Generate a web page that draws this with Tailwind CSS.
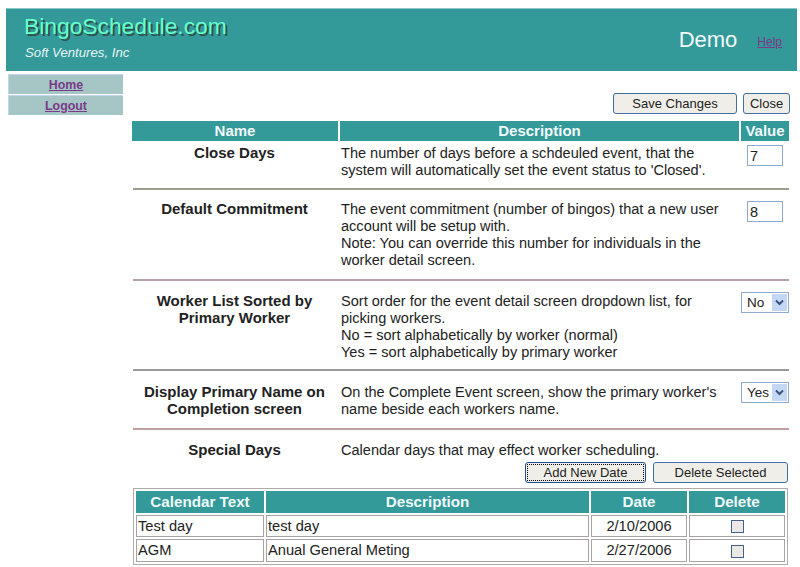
<!DOCTYPE html>
<html lang="en">
<head>
    <meta charset="UTF-8">
    <title>BingoSchedule.com</title>
    <script src="https://cdn.jsdelivr.net/npm/@tailwindcss/browser@4"></script>
</head>
<body class="w-[800px] h-[567px] overflow-hidden bg-white font-['Liberation_Sans',Arial,sans-serif] text-[14.55px] leading-[17px] text-[#222]">
    <!-- Header -->
    <div class="ml-[6px] mt-[8px] w-[791px] h-[63px] bg-[#339999] border-t border-[#8fc4c4] flex justify-between">
        <div class="pl-[18px] pt-[3px]">
            <div class="text-[22.8px] leading-[28px] text-[#66ffcc] [text-shadow:2px_2px_0_#30504a]">BingoSchedule.com</div>
            <div class="mt-[5px] ml-[1px] text-[13.2px] leading-[16px] italic text-[#e6f5f5]">Soft Ventures, Inc</div>
        </div>
        <div class="flex items-start pr-[15px] pt-[17px]">
            <span class="text-[22px] leading-[28px] text-[#f0fafa]">Demo</span>
            <a href="#" class="ml-[20px] mt-[9px] text-[12px] leading-[15px] text-[#7a3a88] underline">Help</a>
        </div>
    </div>

    <div class="flex">
        <!-- Sidebar -->
        <div class="ml-[8px] mt-[3px] w-[115px] flex flex-col gap-[1px]">
            <a href="#" class="h-[20px] bg-[#a6c6c6] border-t border-l border-[#c4d4ec] text-center font-bold text-[12.4px] leading-[20px] text-[#7a3a88] underline">Home</a>
            <a href="#" class="h-[20px] bg-[#a6c6c6] border-t border-l border-[#c4d4ec] text-center font-bold text-[12.4px] leading-[20px] text-[#7a3a88] underline">Logout</a>
        </div>

        <!-- Main -->
        <div class="ml-[8px] w-[660px]">
            <div class="flex justify-end gap-[6px] mt-[22px] h-[21px] pr-[1px]">
                <button class="w-[124px] h-[21px] bg-[#f0eee8] border border-[#3f6f9f] rounded-[3px] text-[13px] leading-[17px] text-[#222]">Save Changes</button>
                <button class="w-[47px] h-[21px] bg-[#f0eee8] border border-[#3f6f9f] rounded-[3px] text-[13px] leading-[17px] text-[#222]">Close</button>
            </div>

            <!-- Settings header -->
            <div class="mt-[7px] ml-[1px] grid grid-cols-[206px_399px_48px] gap-x-[2px] h-[20px] bg-white text-center font-bold text-[#f0fafa] text-[15px] leading-[20px]">
                <div class="bg-[#339999]">Name</div>
                <div class="bg-[#339999]">Description</div>
                <div class="bg-[#339999]">Value</div>
            </div>

            <!-- Close Days -->
            <div class="ml-[2px] w-[656px] h-[49px] border-b-2 border-[#a09c90] grid grid-cols-[206px_1fr_49px] pt-[4px]">
                <div class="text-center font-bold text-[15px] pl-[4px] pr-[7px] -mt-[1px]">Close Days</div>
                <div class="pl-[2px]">The number of days before a schdeuled event, that the<br>system will automatically set the event status to 'Closed'.</div>
                <div class="pl-[7px]"><input value="7" class="w-[36px] h-[21px] border border-[#8fa9cf] px-[2px] text-[14.5px] bg-white"></div>
            </div>

            <!-- Default Commitment -->
            <div class="ml-[2px] w-[656px] h-[91px] border-b-2 border-[#b5a0b0] grid grid-cols-[206px_1fr_49px] pt-[11px]">
                <div class="text-center font-bold text-[15px] pl-[4px] pr-[7px] -mt-[1px]">Default Commitment</div>
                <div class="pl-[2px]">The event commitment (number of bingos) that a new user<br>account will be setup with.<br>Note: You can override this number for individuals in the<br>worker detail screen.</div>
                <div class="pl-[7px]"><input value="8" class="w-[36px] h-[21px] border border-[#8fa9cf] px-[2px] text-[14.5px] bg-white"></div>
            </div>

            <!-- Worker List -->
            <div class="ml-[2px] w-[656px] h-[90px] border-b-2 border-[#9a9a9a] grid grid-cols-[206px_1fr_49px] pt-[12px]">
                <div class="text-center font-bold text-[15px] pl-[4px] pr-[7px] -mt-[1px]">Worker List Sorted by<br>Primary Worker</div>
                <div class="pl-[2px]">Sort order for the event detail screen dropdown list, for<br>picking workers.<br>No = sort alphabetically by worker (normal)<br>Yes = sort alphabetically by primary worker</div>
                <div class="pl-[1px] -mt-[1px]">
                    <div class="w-[48px] h-[21px] border border-[#8fa9cf] flex items-center justify-between pl-[5px] pr-[1px] text-[13.5px]">
                        <span>No</span>
                        <span class="w-[15px] h-[17px] bg-[#c4d8f4] flex items-center justify-center">
                            <svg width="9" height="7" viewBox="0 0 9 7"><path d="M1 1.5 4.5 5 8 1.5" fill="none" stroke="#3d5180" stroke-width="2"/></svg>
                        </span>
                    </div>
                </div>
            </div>

            <!-- Display Primary -->
            <div class="ml-[2px] w-[656px] h-[59px] border-b-2 border-[#c0a0a0] grid grid-cols-[206px_1fr_49px] pt-[13px]">
                <div class="text-center font-bold text-[15px] pl-[4px] pr-[7px] -mt-[1px]">Display Primary Name on<br>Completion screen</div>
                <div class="pl-[2px]">On the Complete Event screen, show the primary worker's<br>name beside each workers name.</div>
                <div class="pl-[1px] -mt-[2px]">
                    <div class="w-[48px] h-[21px] border border-[#8fa9cf] flex items-center justify-between pl-[5px] pr-[1px] text-[13.5px]">
                        <span>Yes</span>
                        <span class="w-[15px] h-[17px] bg-[#c4d8f4] flex items-center justify-center">
                            <svg width="9" height="7" viewBox="0 0 9 7"><path d="M1 1.5 4.5 5 8 1.5" fill="none" stroke="#3d5180" stroke-width="2"/></svg>
                        </span>
                    </div>
                </div>
            </div>

            <!-- Special Days -->
            <div class="ml-[2px] w-[656px] grid grid-cols-[206px_1fr] pt-[12px]">
                <div class="text-center font-bold text-[15px] pl-[4px] pr-[7px] -mt-[1px]">Special Days</div>
                <div class="pl-[2px]">Calendar days that may effect worker scheduling.</div>
            </div>
            <div class="flex justify-end gap-[7px] mt-[3px] h-[21px] pr-[3px]">
                <button class="w-[121px] h-[21px] bg-[#f0eee8] border border-[#1f4f8f] rounded-[3px] outline-1 outline-dotted -outline-offset-3 outline-black text-[13px] leading-[17px] text-[#222]">Add New Date</button>
                <button class="w-[135px] h-[21px] bg-[#f0eee8] border border-[#3f6f9f] rounded-[3px] text-[13px] leading-[17px] text-[#222]">Delete Selected</button>
            </div>

            <!-- Calendar table -->
            <table class="mt-[5px] ml-[2px] w-[655px] table-fixed border border-[#b0aaa8] border-separate border-spacing-[2px] text-[14.67px]">
                <colgroup>
                    <col class="w-[128px]"><col class="w-[323px]"><col class="w-[96px]"><col>
                </colgroup>
                <thead>
                    <tr class="h-[22px] text-center font-bold text-[#f0fafa] text-[15.2px] leading-[20px]">
                        <th class="bg-[#339999] p-0">Calendar Text</th>
                        <th class="bg-[#339999] p-0">Description</th>
                        <th class="bg-[#339999] p-0">Date</th>
                        <th class="bg-[#339999] p-0">Delete</th>
                    </tr>
                </thead>
                <tbody>
                    <tr class="h-[22px]">
                        <td class="border border-[#a8a4a4] pl-[1px] py-0">Test day</td>
                        <td class="border border-[#a8a4a4] pl-[1px] py-0">test day</td>
                        <td class="border border-[#a8a4a4] text-center py-0">2/10/2006</td>
                        <td class="border border-[#a8a4a4] text-center py-0"><input type="checkbox" class="appearance-none w-[13px] h-[13px] border border-[#44608c] bg-[#ece8e6] align-middle"></td>
                    </tr>
                    <tr class="h-[23px]">
                        <td class="border border-[#a8a4a4] pl-[1px] py-0">AGM</td>
                        <td class="border border-[#a8a4a4] pl-[1px] py-0">Anual General Meting</td>
                        <td class="border border-[#a8a4a4] text-center py-0">2/27/2006</td>
                        <td class="border border-[#a8a4a4] text-center py-0"><input type="checkbox" class="appearance-none w-[13px] h-[13px] border border-[#44608c] bg-[#ece8e6] align-middle"></td>
                    </tr>
                </tbody>
            </table>
        </div>
    </div>
</body>
</html>
